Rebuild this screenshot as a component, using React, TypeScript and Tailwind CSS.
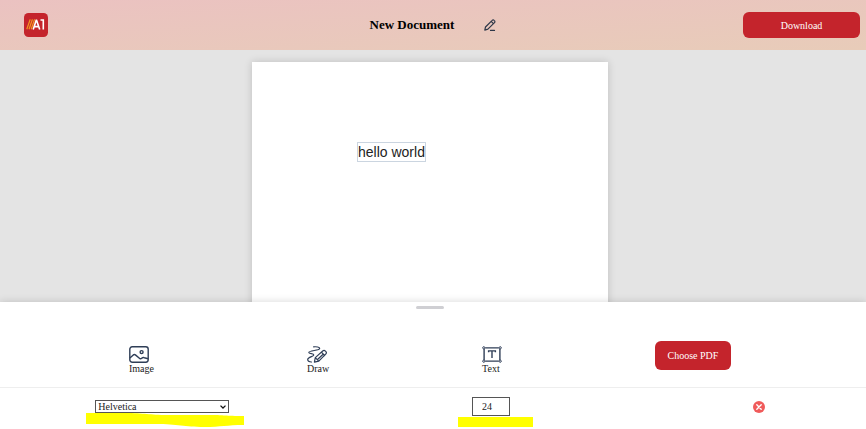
import { useState } from "react";

const serif = "font-['Liberation_Serif','Times_New_Roman',serif]";

function Logo() {
  return (
    <svg viewBox="0 0 24 24" className="ml-[18px] size-6" role="img" aria-label="A1">
      <rect width="24" height="24" rx="4.5" fill="#c4242c" />
      <g fill="none" strokeWidth="1.2">
        <path d="M2.8 16.2 6.2 6.4" stroke="#f39a1f" />
        <path d="M5 16.2 8.4 6.4" stroke="#f39a1f" />
        <path d="M7.2 16.2 10.6 6.4" stroke="#f39a1f" />
        <path d="M9.2 16.4 12.4 6.8 15.7 16.4M10.500 13.600h3.800" stroke="#fff" strokeWidth="1.600" strokeLinejoin="bevel" />
        <path d="M16.500 7h2.800v9.400" stroke="#fff" strokeWidth="1.600" />
      </g>
    </svg>
  );
}

function PencilIcon() {
  return (
    <svg viewBox="0 0 12 12" className="size-3" fill="none" stroke="#2d3748" strokeWidth="1.2" strokeLinecap="round" strokeLinejoin="round" aria-hidden="true">
      <path d="M.8 11.1 1.5 8 8.2 1.3a1.3 1.3 0 0 1 1.9 0l.4.4a1.3 1.3 0 0 1 0 1.9L3.9 10.2ZM7.2 2.4l2.2 2.2M6.5 11.4h4" />
    </svg>
  );
}

function ImageIcon() {
  return (
    <svg viewBox="0 0 20 17" className="h-[17px] w-5" fill="none" stroke="#2f3e57" strokeWidth="1.4" strokeLinejoin="round" aria-hidden="true">
      <rect x=".8" y=".8" width="18.4" height="15.4" rx="2.4" />
      <circle cx="12.6" cy="6.1" r="1.5" />
      <path d="m.9 12 3.4-3.1c.7-.6 1.4-.6 2.1 0l4.3 3.6c.8.6 1.4.4 2-.2.8-.8 1.6-1 2.6-.6l3.8 1" />
    </svg>
  );
}

function DrawIcon() {
  return (
    <svg viewBox="0 0 20 17" className="h-[17px] w-5" fill="none" stroke="#2f3e57" strokeWidth="1.2" strokeLinecap="round" strokeLinejoin="round" aria-hidden="true">
      <path d="M6.6.8C9.500.6 12.700.9 12.700 2.500 12.700 4.700 1.800 4.300 1.800 6.500 1.800 8.100 6.800 7.300 6.800 9 6.800 10.600.7 10.800.7 13.600c0 1.500 1.600 2.400 3.800 2.400" />
      <path d="m7.400 16.200.9-4.600 7.400-6.600a2 2 0 0 1 2.700.1l.3.3a2 2 0 0 1 0 2.800l-6.900 7ZM14.400 6.200l3.200 3.300M8.300 11.600l3.400 3.600M10.800 13.300l4.800-4.600" />
    </svg>
  );
}

function TextIcon() {
  return (
    <svg viewBox="0 0 20 17" className="h-[17px] w-5" fill="none" stroke="#2f3e57" strokeWidth="1.4" aria-hidden="true">
      <path d="M3.2 1.9h13.6M3.2 15.1h13.6M2.1 3v11M17.900 3v11M6.600 6.300V4.900h6.800v1.400M10 4.900v7.200" />
      <g strokeWidth="1">
        <circle cx="1.8" cy="1.8" r="1.1" />
        <circle cx="18.2" cy="1.8" r="1.1" />
        <circle cx="1.8" cy="15.2" r="1.1" />
        <circle cx="18.2" cy="15.2" r="1.1" />
      </g>
    </svg>
  );
}

const tools = [
  { label: "Image", Icon: ImageIcon },
  { label: "Draw", Icon: DrawIcon },
  { label: "Text", Icon: TextIcon },
];

export default function App() {
  const [font, setFont] = useState("Helvetica");
  const [size, setSize] = useState("24");

  return (
    <div className={`flex h-screen flex-col overflow-hidden bg-[#e4e4e4] text-[#222] ${serif}`}>
      <header className="grid h-[50px] shrink-0 grid-cols-[1fr_auto_1fr] items-center bg-linear-to-br from-[#ebc2c1] to-[#e8ccb9] px-1.5">
        <Logo />
        <div className="flex items-center gap-[30px]">
          <h1 className="text-[13px] leading-5 font-bold text-black">New Document</h1>
          <button type="button" aria-label="Rename document">
            <PencilIcon />
          </button>
        </div>
        <button type="button" className="h-[26px] w-[117px] justify-self-end rounded-md bg-[#c4242c] text-[10px] text-white">
          Download
        </button>
      </header>

      <main className="flex min-h-0 flex-1 justify-center overflow-hidden pt-3 pr-1.5">
        <div className="relative h-[480px] w-[356px] shrink-0 bg-white shadow-[0_0_8px_rgba(0,0,0,0.16)]">
          <div className="absolute top-20 left-[105px] border border-[#cbd5e0] font-['Liberation_Sans',Arial,sans-serif] text-[14px] leading-[18px] whitespace-nowrap text-[#222]">
            hello world
          </div>
        </div>
      </main>

      <section className="relative h-[127px] shrink-0 bg-white shadow-[0_0_8px_rgba(0,0,0,0.16)]">
        <div className="flex h-[86px] flex-col border-b border-[#eeeeee] pt-1 pr-1.5">
          <div className="mx-auto h-[3px] w-7 rounded-sm bg-[#cfcfd3]" />
          <div className="flex flex-1 items-start justify-between px-[15%] pt-8">
            {tools.map(({ label, Icon }) => (
              <button key={label} type="button" className="flex flex-col items-start pt-[5px] text-[10px] leading-3">
                <Icon />
                <span>{label}</span>
              </button>
            ))}
            <button type="button" className="h-[29px] w-[76px] rounded-md bg-[#c4242c] text-[10px] text-white">
              Choose PDF
            </button>
          </div>
        </div>

        <div className="relative mr-1.5 flex h-[37px] items-center justify-between px-[11%]">
          <div className="relative flex">
            <select
              aria-label="Font family"
              value={font}
              onChange={(e) => setFont(e.target.value)}
              className="h-[13px] w-[134px] appearance-none border border-[#555] bg-white pl-[2px] text-[10px] leading-[11px]"
            >
              <option>Helvetica</option>
              <option>Courier</option>
              <option>Times-Roman</option>
            </select>
            <svg viewBox="0 0 6 4" className="pointer-events-none absolute top-[5px] right-[3px] h-1 w-1.5" fill="none" stroke="#111" strokeWidth="1.3" aria-hidden="true">
              <path d="M.5.6 3 3 5.500.6" />
            </svg>
            <svg viewBox="0 0 158 14" className="pointer-events-none absolute top-[13px] -left-[9px] h-3.5 w-[158px]" fill="#ffff00" aria-hidden="true">
              <path d="M0 0h38c22 0 24 2 44 2h45c10 0 12 1 31 1v9c-18 0-22 2-40 2-20 0-26-3-48-3H0Z" />
            </svg>
          </div>
          <div className="relative flex">
            <input
              aria-label="Font size"
              inputMode="numeric"
              value={size}
              onChange={(e) => setSize(e.target.value)}
              className="h-[19px] w-[38px] border border-[#555] bg-white pl-[9px] text-[10px]"
            />
            <div className="pointer-events-none absolute top-5 -left-3.5 h-2.5 w-[75px] bg-[#ffff00]" />
          </div>
          <button type="button" aria-label="Delete text">
            <svg viewBox="0 0 12 12" className="size-3" aria-hidden="true">
              <circle cx="6" cy="6" r="6" fill="#f05b5b" />
              <path d="m3.800 3.800 4.400 4.400m0-4.400-4.400 4.400" stroke="#fff" strokeWidth="1.4" strokeLinecap="round" />
            </svg>
          </button>
        </div>
      </section>
    </div>
  );
}
